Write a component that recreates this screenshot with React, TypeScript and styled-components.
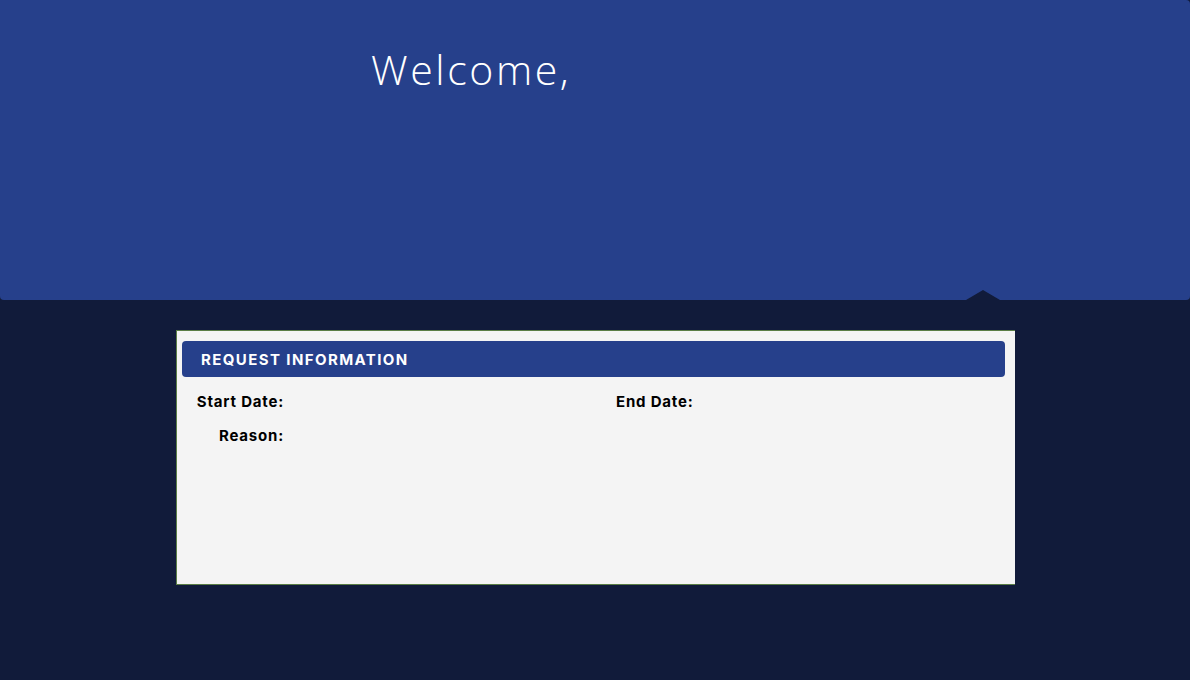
import React from "react";
import styled, { createGlobalStyle } from "styled-components";

const Global = createGlobalStyle`
  html, body { margin: 0; padding: 0; background: #111b3a; }
  body { font-family: "Inter", "Noto Sans", sans-serif; }
  #root { min-height: 680px; }
`;

const Page = styled.div`
  width: 1190px;
  height: 680px;
  background: #111b3a;
  display: flex;
  flex-direction: column;
  overflow: hidden;
`;

const Hero = styled.header`
  position: relative;
  height: 300px;
  background: #26408b;
  border-radius: 0 4px 4px 4px;
  padding: 44px 0 0 371px;
  box-sizing: border-box;
`;

const Notch = styled.div`
  position: absolute;
  left: 966px;
  bottom: 0;
  width: 0;
  height: 0;
  border-left: 17px solid transparent;
  border-right: 17px solid transparent;
  border-bottom: 10px solid #111b3a;
`;

const Welcome = styled.h1`
  margin: 0;
  font-family: "Open Sans", "Noto Sans", sans-serif;
  font-weight: 300;
  font-size: 41px;
  line-height: 50px;
  color: #ffffff;
  letter-spacing: 2.6px;
`;

const Main = styled.main`
  padding: 30px 0 0 176px;
`;

const Card = styled.section`
  width: 839px;
  height: 255px;
  box-sizing: border-box;
  background: #f4f4f4;
  border: 1px solid #5a7d45;
  border-right: none;
  padding: 10px 10px 0 5px;
`;

const SectionBar = styled.div`
  height: 36px;
  background: #26408b;
  border-radius: 4px;
  display: flex;
  align-items: center;
  padding-left: 19px;
  color: #fff;
  font-family: "Inter", "Noto Sans", sans-serif;
  font-weight: 700;
  font-size: 15px;
  letter-spacing: 1.4px;
`;

const Fields = styled.div`
  display: grid;
  grid-template-columns: 420px 1fr;
  padding: 15px 0 0 0;
  row-gap: 14px;
`;

const Field = styled.div<{ $indent?: number }>`
  display: flex;
  padding-left: ${(p) => p.$indent ?? 13}px;
`;

const Label = styled.span<{ $w?: number }>`
  display: inline-block;
  min-width: ${(p) => (p.$w ? `${p.$w}px` : "auto")};
  text-align: right;
  font-family: "Inter", "Noto Sans", sans-serif;
  font-weight: 700;
  font-size: 15px;
  line-height: 20px;
  letter-spacing: 0.8px;
  color: #000;
`;

export default function App() {
  return (
    <Page>
      <Global />
      <Hero>
        <Welcome>Welcome,</Welcome>
        <Notch />
      </Hero>
      <Main>
        <Card>
          <SectionBar>REQUEST INFORMATION</SectionBar>
          <Fields>
            <Field>
              <Label $w={89}>Start Date:</Label>
            </Field>
            <Field $indent={14}>
              <Label>End Date:</Label>
            </Field>
            <Field>
              <Label $w={89}>Reason:</Label>
            </Field>
          </Fields>
        </Card>
      </Main>
    </Page>
  );
}
